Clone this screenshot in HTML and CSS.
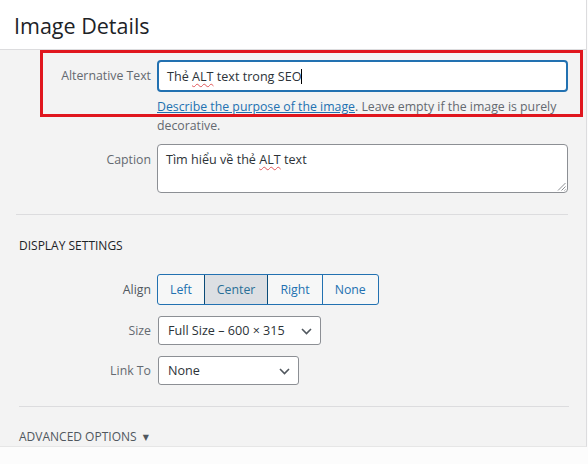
FILE: index.html
```html
<!DOCTYPE html>
<html>
<head>
<meta charset="utf-8">
<link rel="stylesheet" href="styles.css">
</head>
<body>
<div class="page">
  <header class="header"><h1 class="title">Image Details</h1></header>
  <main class="panel">
    <div class="highlight"></div>
    <div class="row">
      <div class="label label-input">Alternative Text</div>
      <div class="control">
        <div class="input focused"><span>Thẻ <span class="spell">ALT</span> text trong SEO</span><span class="caret"></span></div>
        <p class="help"><a class="link" href="#">Describe the purpose of the image</a>. Leave empty if the image is purely<br>decorative.</p>
      </div>
    </div>
    <div class="row row-caption">
      <div class="label label-area">Caption</div>
      <div class="control">
        <div class="textarea">Tìm hiểu về thẻ <span class="spell">ALT</span> text
          <svg class="grip" width="9" height="9" viewBox="0 0 9 9"><path d="M8.5 1 L1 8.5 M8.5 4.5 L4.5 8.5 M8.5 7.5 L7.5 8.5" stroke="#8c8f94" stroke-width="1" fill="none"/></svg>
        </div>
      </div>
    </div>
    <hr class="sep sep-first">
    <h2 class="section">Display Settings</h2>
    <div class="row row-align">
      <div class="label label-btn">Align</div>
      <div class="control">
        <div class="btn-group">
          <span class="btn">Left</span>
          <span class="btn pressed">Center</span>
          <span class="btn">Right</span>
          <span class="btn">None</span>
        </div>
      </div>
    </div>
    <div class="row row-select">
      <div class="label label-select">Size</div>
      <div class="control">
        <div class="select select-size"><span>Full Size – 600 × 315</span>
          <svg class="chev" width="11" height="7" viewBox="0 0 11 7"><polyline points="1,1 5.5,5.5 10,1" fill="none" stroke="#50575e" stroke-width="1.6"/></svg>
        </div>
      </div>
    </div>
    <div class="row row-select">
      <div class="label label-select">Link To</div>
      <div class="control">
        <div class="select select-link"><span>None</span>
          <svg class="chev" width="11" height="7" viewBox="0 0 11 7"><polyline points="1,1 5.5,5.5 10,1" fill="none" stroke="#50575e" stroke-width="1.6"/></svg>
        </div>
      </div>
    </div>
    <hr class="sep sep-second">
    <div class="advanced">Advanced Options <span class="arrow">▼</span></div>
  </main>
</div>
</body>
</html>
```

FILE: styles.css
```css
* { box-sizing: border-box; }
html, body { margin: 0; padding: 0; }
body {
  background: #fcfcfc;
  font-family: "Open Sans", "Noto Sans", "DejaVu Sans", sans-serif;
  font-size: 12.3px;
  color: #2c3338;
  width: 588px;
  height: 464px;
  overflow: hidden;
}
.page { width: 588px; }
.header {
  height: 50px;
  background: #ffffff;
  border-bottom: 1px solid #dcdcde;
  border-right: 1px solid #dcdcde;
  width: 587px;
  padding-left: 14px;
}
.title {
  margin: 0;
  font-size: 21.5px;
  font-weight: 500;
  line-height: 51px;
  color: #1d2327;
}
.panel {
  position: relative;
  width: 587px;
  height: 397px;
  background: #f3f3f3;
  border-right: 1px solid #dcdcde;
  border-bottom: 1px solid #e6e6e6;
  padding: 10px 0 0 16px;
}
.highlight {
  position: absolute;
  left: 40px;
  top: 0px;
  width: 543px;
  height: 67px;
  border: 3px solid #e0161e;
  pointer-events: none;
}
.row {
  display: grid;
  grid-template-columns: 135px 411px;
  column-gap: 6px;
  width: 552px;
}
.label {
  text-align: right;
  color: #646970;
  white-space: nowrap;
}
.label-input { line-height: 32px; }
.label-area { padding-top: 6px; line-height: 19px; }
.label-btn { line-height: 31px; color: #50575e; }
.label-select { line-height: 29px; }
.input {
  height: 32px;
  background: #fff;
  border: 2px solid #2271b1;
  border-radius: 4px;
  padding: 0 8px;
  display: flex;
  align-items: center;
  font-size: 12.6px;
  color: #2c3338;
}
.caret {
  display: inline-block;
  width: 1px;
  height: 15px;
  background: #000;
  margin-left: 0px;
}
.spell {
  text-decoration: underline wavy #e0575a;
  text-decoration-thickness: 1px;
  text-underline-offset: 2px;
}
.help {
  margin: 5px 0 0 0;
  line-height: 19px;
  color: #646970;
}
.link {
  color: #2271b1;
  text-decoration: underline;
}
.row-caption { margin-top: 9px; }
.textarea {
  position: relative;
  height: 49px;
  background: #fff;
  border: 1px solid #8c8f94;
  border-radius: 4px;
  padding: 5px 8px;
  line-height: 19px;
  font-size: 12.6px;
  color: #2c3338;
}
.grip {
  position: absolute;
  right: 1px;
  bottom: 1px;
}
.sep {
  border: 0;
  height: 1px;
  background: #dcdcde;
  margin: 0;
}
.sep-first { width: 552px; margin-top: 21px; }
.sep-second { width: 550px; margin-left: 3px; margin-top: 21px; }
.section {
  margin: 21px 0 0 3px;
  font-size: 12px;
  font-weight: 400;
  line-height: 19px;
  text-transform: uppercase;
  color: #1d2327;
}
.row-align { margin-top: 19px; }
.btn-group {
  display: inline-flex;
  height: 31px;
  border: 1px solid #2271b1;
  border-radius: 3px;
  background: #f6f7f7;
  overflow: hidden;
}
.btn {
  display: flex;
  align-items: center;
  padding: 0 12px;
  color: #2271b1;
  border-left: 1px solid #2271b1;
}
.btn:first-child { border-left: 0; }
.btn.pressed {
  background: #dcdfe3;
  color: #2a6f97;
  border-left: 1px solid #0a4b78;
  border-right: 1px solid #0a4b78;
}
.btn.pressed + .btn { border-left: 0; }
.row-select { margin-top: 11px; }
.select {
  height: 29px;
  margin-left: 1px;
  background: #fff;
  border: 1px solid #8c8f94;
  border-radius: 3px;
  display: flex;
  align-items: center;
  justify-content: space-between;
  padding: 0 8px 0 9px;
  font-size: 12.6px;
  color: #2c3338;
}
.select-size { width: 163px; }
.select-link { width: 141px; }
.chev { margin-top: 1px; }
.advanced {
  margin: 20px 0 0 3px;
  line-height: 19px;
  font-size: 12px;
  text-transform: uppercase;
  color: #50575e;
}
.arrow {
  font-size: 8px;
  vertical-align: 1px;
  margin-left: 3px;
  color: #50575e;
}
```
